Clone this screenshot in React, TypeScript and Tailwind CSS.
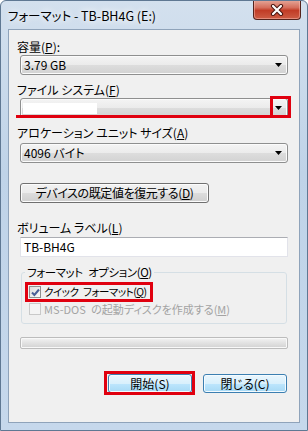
import React from "react";

const jp = "font-['Noto_Sans_CJK_JP',sans-serif] [font-feature-settings:'palt']";

const Arrow = () => (
  <svg width="7" height="4" viewBox="0 0 7 4">
    <path d="M0 0H7L3.5 4Z" fill="#000" />
  </svg>
);

const Key = ({ k }: { k: string }) => (
  <>
    (<span className="underline underline-offset-[1px]">{k}</span>)
  </>
);

const Label = ({ children, className = "" }: { children: React.ReactNode; className?: string }) => (
  <div className={"-ml-[3px] h-[16px] text-[12px] leading-[16px] text-black " + className}>{children}</div>
);

const Combo = ({ children, className = "" }: { children?: React.ReactNode; className?: string }) => (
  <div
    className={
      "relative flex h-[20px] items-center justify-between rounded-[3px] border border-[#8e8f8f] bg-[linear-gradient(#f4f4f4,#ebebeb_50%,#dddddd_50%,#d2d2d2)] pl-[3px] pr-[5px] text-[12px] text-black shadow-[inset_0_0_0_1px_#fbfbfb] " +
      className
    }
  >
    <span className="leading-[18px]">{children}</span>
    <Arrow />
  </div>
);

const Check = ({ checked, disabled }: { checked?: boolean; disabled?: boolean }) => (
  <div
    className={
      "flex h-[12px] w-[12px] shrink-0 items-center justify-center border " +
      (disabled
        ? "border-[#c9c9c9] bg-[#f4f4f4]"
        : "border-[#8e8f8f] bg-[linear-gradient(135deg,#dcdcdc,#fbfbfb)]")
    }
  >
    {checked && (
      <svg width="9" height="9" viewBox="0 0 9 9">
        <path d="M1 4.5L3.4 7L8 1.5" stroke="#4a5f97" strokeWidth="2" fill="none" />
      </svg>
    )}
  </div>
);

export default function App() {
  return (
    <div className={"flex h-[431px] w-[308px] flex-col overflow-hidden rounded-t-[6px] border border-[#5f7893] bg-[linear-gradient(180deg,#d3e0ee,#bfd3e8_40%,#c6d8ec)] " + jp}>
      {/* title bar */}
      <div className="flex h-[28px] items-start justify-between pl-[7px] pr-[6px]">
        <div className="mt-[5px] text-[12.5px] leading-[20px] text-black [text-shadow:0_0_6px_#fff,0_0_10px_#fff]">
          フォーマット - TB-BH4G (E:)
        </div>
        <div className="-mt-[1px] flex h-[20px] w-[48px] items-center justify-center rounded-b-[4px] border border-t-0 border-[#54231c] bg-[linear-gradient(#e6a99b,#d56e5c_40%,#c13c26_55%,#cd5d45)] shadow-[inset_0_0_0_1px_rgba(255,200,190,0.45)]">
          <svg width="14" height="12" viewBox="0 0 14 12">
            <path d="M3 2L11 10M11 2L3 10" stroke="#4a1610" strokeWidth="4.2" strokeLinecap="round" />
            <path d="M3 2L11 10M11 2L3 10" stroke="#fff" strokeWidth="2.2" strokeLinecap="round" />
          </svg>
        </div>
      </div>

      {/* client area */}
      <div className="mx-[7px] mb-[7px] flex flex-1 flex-col border border-[#8fa3ba] bg-[#f0f0f0] px-[11px] pt-[9px]">
        <Label>
          容量<Key k="P" />:
        </Label>
        <Combo>3.79 GB</Combo>

        <Label className="mt-[7px]">
          ファイル システム<Key k="F" />
        </Label>
        <div className="relative">
          <Combo>
            <span className="ml-[-1px] block h-[11px] w-[74px] bg-white" />
          </Combo>
          <div className="absolute -right-[3px] -top-[2px] h-[22px] w-[21px] border-[3px] border-[#e0000f]" />
          <div className="absolute -left-[4px] top-[17px] h-[3px] w-[274px] bg-[#e0000f]" />
        </div>

        <Label className="mt-[7px]">
          アロケーション ユニット サイズ<Key k="A" />
        </Label>
        <Combo className="mt-[2px]">4096 バイト</Combo>

        <button className="mt-[20px] flex h-[20px] w-[189px] items-center justify-center rounded-[3px] border border-[#707070] bg-[linear-gradient(#f2f2f2,#ebebeb_50%,#dddddd_50%,#cfcfcf)] text-[12px] leading-[18px] tracking-[-0.4px] text-black shadow-[inset_0_0_0_1px_#fcfcfc]">
          デバイスの既定値を復元する<Key k="D" />
        </button>

        <Label className="mt-[17px]">
          ボリューム ラベル<Key k="L" />
        </Label>
        <div className="mt-[1px] flex h-[20px] items-center border border-[#e2e3ea] border-t-[#abadb3] bg-white pl-[3px] text-[12px] leading-[18px] text-black">
          TB-BH4G
        </div>

        <fieldset className="mx-[1px] mt-[7px] rounded-[3px] border border-[#d5dfe5] pb-[6px] pl-[7px]">
          <legend className="-ml-[4px] px-[2px] text-[11.5px] leading-[16px] tracking-[-0.4px] text-black">
            フォーマット{"\u2002"}オプション<Key k="O" />
          </legend>
          <div className="relative mt-[4px] flex h-[16px] items-center gap-[3px] text-[10.5px] leading-[16px] text-black">
            <Check checked />
            <span className="tracking-[-0.5px]">
              クイック{"\u2002"}フォーマット<Key k="Q" />
            </span>
            <div className="absolute -left-[4px] -top-[2px] h-[20px] w-[128px] border-[3px] border-[#e0000f]" />
          </div>
          <div className="mt-[1px] flex h-[16px] items-center gap-[3px] text-[11px] leading-[16px] text-[#a3a3a3]">
            <Check disabled />
            <span>
              MS-DOS{"\u2002"}の起動ディスクを作成する<Key k="M" />
            </span>
          </div>
        </fieldset>

        <div className="mt-[13px] h-[12px] rounded-[2px] border border-[#bcbcbc] bg-[linear-gradient(#f3f3f3,#e2e2e2_50%,#d2d2d2)] shadow-[inset_0_0_0_1px_#f8f8f8]" />

        <div className="mr-[1px] mt-[25px] flex justify-end gap-[11px]">
          <div className="relative">
            <button className="flex h-[19px] w-[84px] items-center justify-center rounded-[3px] border border-[#3c7fb1] bg-[linear-gradient(#eaf6fd,#d9f0fc_50%,#bee6fd_50%,#a7d9f5)] text-[12px] leading-[17px] text-black shadow-[inset_0_0_0_1px_#f4fbff]">
              開始(S)
            </button>
            <div className="absolute -left-[4px] -top-[3px] h-[24px] w-[91px] border-[3px] border-[#e0000f]" />
          </div>
          <button className="flex h-[19px] w-[84px] items-center justify-center rounded-[3px] border border-[#3c7fb1] bg-[linear-gradient(#eaf6fd,#d9f0fc_50%,#bee6fd_50%,#a7d9f5)] text-[12px] leading-[17px] text-black shadow-[inset_0_0_0_1px_#f4fbff]">
            閉じる(C)
          </button>
        </div>
      </div>
    </div>
  );
}
